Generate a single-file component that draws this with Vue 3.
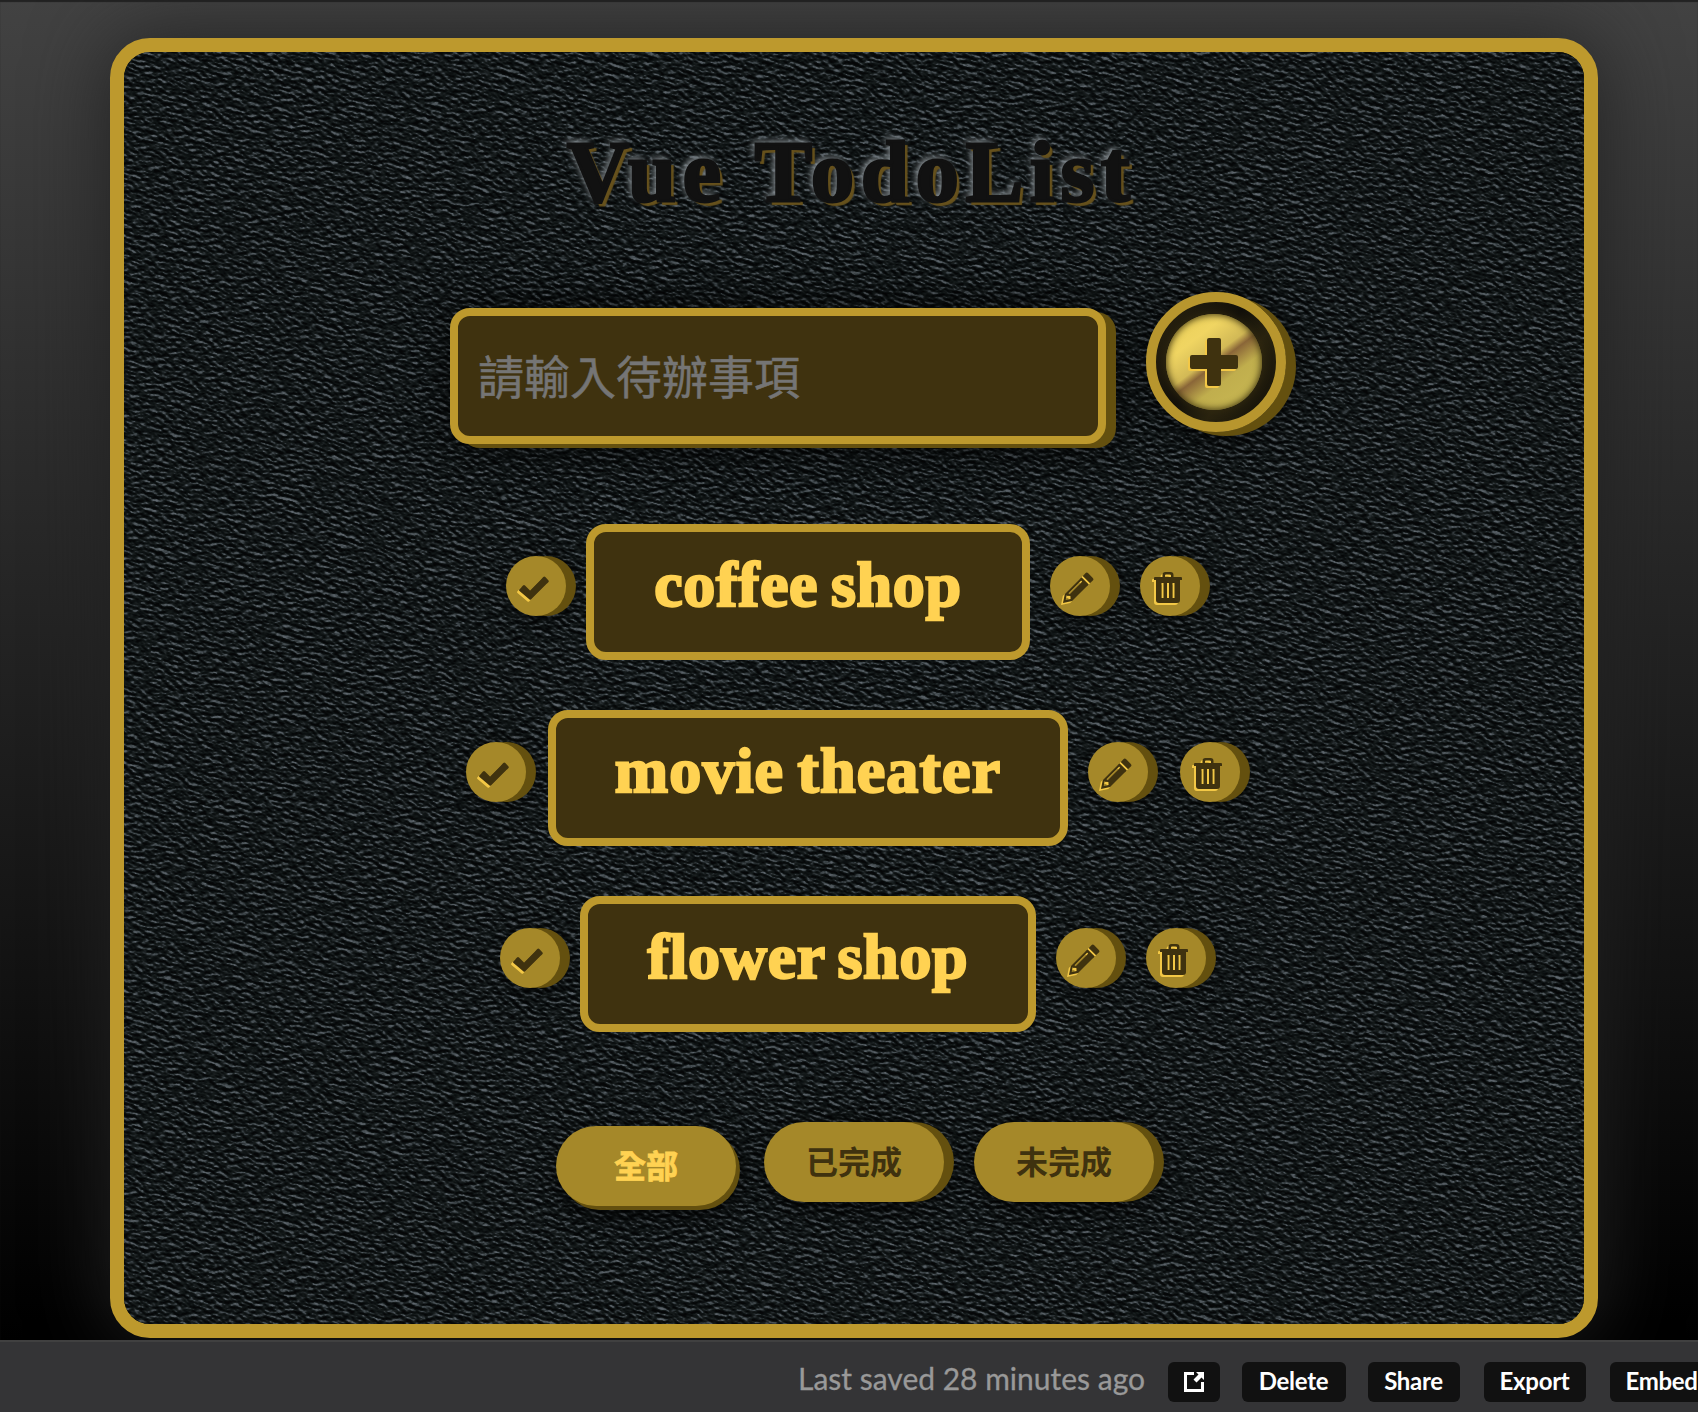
<script setup>
const todos = [
  { text: 'coffee shop', width: 444, spacing: 0.7, spread: 0 },
  { text: 'movie theater', width: 520, spacing: 1.2, spread: 2 },
  { text: 'flower shop', width: 456, spacing: 0.7, spread: 0 }
]
const filters = [
  { label: '全部', active: true },
  { label: '已完成', active: false },
  { label: '未完成', active: false }
]
const actions = ['Delete', 'Share', 'Export', 'Embed']
</script>

<template>
  <div class="page">
    <main class="stage">
      <section class="panel">
        <div class="leather" aria-hidden="true">
          <svg>
            <filter id="grain" x="0" y="0" width="100%" height="100%" color-interpolation-filters="sRGB">
              <feTurbulence type="fractalNoise" baseFrequency="0.15 0.28" numOctaves="4" seed="8" result="n" />
              <feDiffuseLighting in="n" surfaceScale="3" diffuseConstant="1" lighting-color="#fff" result="l">
                <feDistantLight azimuth="262" elevation="28" />
              </feDiffuseLighting>
              <feComponentTransfer>
                <feFuncR type="table" tableValues="0.02 0.03 0.04 0.05 0.06 0.08 0.1 0.15 0.23 0.31 0.4" />
                <feFuncG type="table" tableValues="0.025 0.04 0.055 0.067 0.08 0.1 0.12 0.175 0.26 0.34 0.43" />
                <feFuncB type="table" tableValues="0.03 0.042 0.06 0.07 0.082 0.102 0.125 0.185 0.275 0.36 0.46" />
              </feComponentTransfer>
            </filter>
            <rect width="100%" height="100%" filter="url(#grain)" />
          </svg>
        </div>

        <h1>Vue TodoList</h1>

        <form class="entry" @submit.prevent>
          <input type="text" placeholder="請輸入待辦事項" />
          <button class="add" type="button" aria-label="add">
            <span class="disc">
              <svg viewBox="0 0 48 48" width="48" height="48">
                <path d="M19 0h10a2 2 0 0 1 2 2v15h15a2 2 0 0 1 2 2v10a2 2 0 0 1-2 2H31v15a2 2 0 0 1-2 2H19a2 2 0 0 1-2-2V31H2a2 2 0 0 1-2-2V19a2 2 0 0 1 2-2h15V2a2 2 0 0 1 2-2z" />
              </svg>
            </span>
          </button>
        </form>

        <ul class="list">
          <li v-for="todo in todos" :key="todo.text">
            <button class="round" aria-label="done" :style="{ marginRight: todo.spread + 'px' }">
              <svg viewBox="0 0 32 32" width="32" height="32">
                <path d="M1.500 17.200 5 13.600q1-1 2 0l5 5L25.300 5q1-1 2 0l3 3.200q1 1 0 2L13.300 27.300q-1 1-2 0L1.500 19q-1-1 0-1.800z" />
              </svg>
            </button>
            <div class="item" :style="{ width: todo.width + 'px', letterSpacing: todo.spacing + 'px' }">{{ todo.text }}</div>
            <button class="round edit" aria-label="edit">
              <svg viewBox="0 0 32 32" width="32" height="32">
                <path fill-rule="evenodd" d="M23.400 1.300q1.400-1.400 2.800 0l4.600 4.600q1.300 1.300 0 2.700l-2.700 2.700-7.400-7.300zM19.500 5.200l7.300 7.300L10.200 29 1 31l1.800-9.100zM4.600 23.300l-.9 4.800 4.900-1-.2-3.100-3.100-.3zM19.300 8.500 6.500 21.200l1 1L20.300 9.500z" />
              </svg>
            </button>
            <button class="round last" aria-label="delete" :style="{ marginLeft: 10 + todo.spread + 'px' }">
              <svg viewBox="0 0 32 32" width="32" height="32">
                <path fill-rule="evenodd" d="M10.500 5V3q0-3 3-3h5q3 0 3 3v2H29q1 0 1 1v2h-2v20q0 3-3 3H7q-3 0-3-3V8H2V6q0-1 1-1zm2.500 0h6V3.500q0-1-1-1h-4q-1 0-1 1zM9.500 11v15h2V11zm5.500 0v15h2V11zm5.500 0v15h2V11z" />
              </svg>
            </button>
          </li>
        </ul>

        <nav class="filters">
          <button v-for="f in filters" :key="f.label" :class="{ active: f.active }">{{ f.label }}</button>
        </nav>
      </section>
    </main>

    <footer>
      <span class="saved">Last saved 28 minutes ago</span>
      <button class="popout" aria-label="open">
        <svg viewBox="0 0 20 20" width="20" height="20">
          <path d="M10 1.500H1.500v17h17V10" fill="none" stroke="#fff" stroke-width="3" />
          <path d="M12 0h8v8l-2.500-2.500-5 5-3-3 5-5z" fill="#fff" />
        </svg>
      </button>
      <button v-for="a in actions" :key="a" :class="a.toLowerCase()">{{ a }}</button>
    </footer>
  </div>
</template>

<style>
body {
  margin: 0;
  overflow: hidden;
  background: #343436;
}
</style>

<style scoped>
* {
  box-sizing: border-box;
}
button {
  border: 0;
  padding: 0;
  flex: none;
}
svg {
  display: block;
}
.page {
  width: 1698px;
  height: 1412px;
  overflow: hidden;
  display: flex;
  flex-direction: column;
}
.stage {
  height: 1340px;
  flex: none;
  padding: 38px 100px 0 110px;
  overflow: hidden;
  background: linear-gradient(#424242, #000);
  box-shadow: inset 0 2px 1px #222;
}
.panel {
  position: relative;
  height: 1300px;
  border: 14px solid #bd992d;
  border-radius: 40px;
  background: #0d1213;
  box-shadow: 0 0 80px #222;
  display: flex;
  flex-direction: column;
}
.leather {
  position: absolute;
  inset: 0;
  border-radius: 26px;
  overflow: hidden;
}
.leather svg {
  width: 2000px;
  height: 2000px;
  margin: -364px 0 0 -270px;
  transform: rotate(17deg);
}
h1,
.entry,
.list,
.filters {
  position: relative;
}
h1 {
  margin: 71px 0 0 443px;
  height: 104px;
  font: bold 86px/99px "Liberation Serif", serif;
  letter-spacing: 6.9px;
  white-space: nowrap;
  color: #111;
  -webkit-text-stroke: 3px #111;
  text-shadow: 4px 3.500px 1px #66511c, -3px -3px 6px #8d9498;
}
.entry {
  display: flex;
  align-items: flex-start;
  margin: 65px 0 0 326px;
}
input {
  width: 656px;
  height: 136px;
  margin: 16px 40px 0 0;
  padding: 0 20px 5px;
  border: 8px solid #bd992d;
  border-radius: 20px;
  outline: 0;
  background: #3f320f;
  font: 46px "Noto Sans CJK TC", sans-serif;
  box-shadow: 10px 4px 0 #64500f, 4px 2px 40px rgba(0, 0, 0, 0.9);
}
input::placeholder {
  color: #757575;
  -webkit-text-stroke: 0.5px #757575;
  opacity: 1;
}
.add {
  width: 140px;
  height: 140px;
  padding: 10px;
  border: 10px solid #b8962e;
  border-radius: 50%;
  background: linear-gradient(125deg, #2c2410, #12100a 45%, #29230f 65%, #100e08);
  box-shadow: 10px 4px 0 #64500f, 4px 4px 30px rgba(0, 0, 0, 0.9);
}
.disc {
  display: flex;
  align-items: center;
  justify-content: center;
  width: 96px;
  height: 96px;
  border-radius: 50%;
  background: linear-gradient(143deg, #e8cd55 0%, #f0d562 28%, #d2b956 46%, #8a6638 52%, #c0ae4d 66%, #cbbb55 100%);
  box-shadow: inset 0 0 7px 1px #433812, 0 0 10px #352c10;
}
.disc svg {
  margin-top: -1px;
}
.disc svg,
.round svg {
  fill: #3f320f;
  overflow: visible;
  filter: drop-shadow(-2px 2px 0 #f3c846);
}
.list {
  list-style: none;
  margin: 80px 0 0;
  padding: 0 2px 0 0;
  display: flex;
  flex-direction: column;
  gap: 50px;
}
.list li {
  display: flex;
  align-items: flex-start;
  justify-content: center;
  gap: 20px;
  height: 136px;
}
.item {
  height: 136px;
  flex: none;
  border: 8px solid #bd992d;
  border-radius: 20px;
  background: #3f320f;
  color: #ffd252;
  -webkit-text-stroke: 2.4px #ffd252;
  font: bold 64px/105px "Liberation Serif", serif;
  word-spacing: -4px;
  text-align: center;
  white-space: nowrap;
}
.round {
  display: flex;
  align-items: center;
  width: 60px;
  height: 60px;
  margin-top: 32px;
  padding: 3px 0 0 12px;
  border-radius: 50%;
  background: #a58829;
  box-shadow: 10px 0 0 #64500f, 5px 2px 20px rgba(0, 0, 0, 0.8);
}
.filters {
  display: flex;
  gap: 30px;
  margin: 90px 0 0 428px;
}
.filters button {
  width: 180px;
  height: 80px;
  padding-bottom: 4px;
  border-radius: 40px;
  background: #a58829;
  color: #3f320f;
  font: bold 32px "Noto Sans CJK TC", sans-serif;
  box-shadow: 10px 0 0 #64500f, 4px 4px 24px rgba(0, 0, 0, 0.9);
}
.filters .active {
  margin-right: 2px;
  transform: translate(4px, 4px);
  color: #ffd252;
  -webkit-text-stroke: 0.8px #ffd252;
  box-shadow: 4px 4px 0 #64500f, 4px 8px 24px rgba(0, 0, 0, 0.9);
}
footer {
  height: 72px;
  flex: none;
  border-top: 2px solid #404040;
  background: #343436;
  display: flex;
  padding: 20px 0 0 798px;
  font-family: Lato, sans-serif;
}
.saved {
  width: 370px;
  flex: none;
  font-size: 30px;
  line-height: 36px;
  margin-top: -2px;
  color: #999;
  -webkit-text-stroke: 0.3px #999;
  white-space: nowrap;
}
footer button {
  height: 40px;
  padding: 0 1px 2px 0;
  border-radius: 6px;
  background: #111;
  color: #fff;
  font: bold 24px/36px Lato, sans-serif;
  letter-spacing: -0.3px;
}
footer .popout {
  width: 52px;
  padding: 0 16px;
}
.delete {
  width: 104px;
  margin-left: 22px;
}
.share {
  width: 92px;
  margin-left: 22px;
}
.export {
  width: 102px;
  margin-left: 24px;
}
.embed {
  width: 104px;
  margin-left: 24px;
}
</style>
